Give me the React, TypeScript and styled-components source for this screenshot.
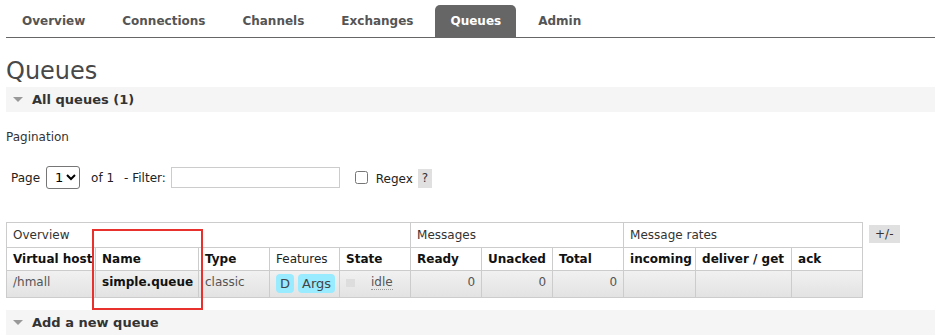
import { createGlobalStyle, styled } from "styled-components";

const GlobalStyle = createGlobalStyle`
  html, body {
    margin: 0;
    padding: 0;
    background: #fff;
  }
  body {
    font-family: "DejaVu Sans", Verdana, sans-serif;
    font-size: 12px;
    color: #484848;
  }
`;

const Page = styled.div`
  padding-left: 6px;
`;

const Menu = styled.ul`
  list-style: none;
  margin: 0;
  padding: 5px 0 0 1px;
  display: flex;
  gap: 7px;
  border-bottom: 1px solid #666;
`;

const Tab = styled.li<{ $active?: boolean }>`
  height: 32px;
  line-height: 32px;
  padding: 0 15px;
  font-weight: bold;
  font-size: 12px;
  color: ${p => (p.$active ? "#fff" : "#555")};
  background: ${p => (p.$active ? "#666" : "transparent")};
  border-radius: 5px 5px 0 0;
`;

const Title = styled.h1`
  margin: 18px 0 0;
  font-size: 24px;
  font-weight: normal;
  line-height: 30px;
  color: #484848;
`;

const SectionBar = styled.div<{ $top: number }>`
  margin-top: ${p => p.$top}px;
  height: 25px;
  background: #f5f5f5;
  display: flex;
  align-items: center;
  gap: 9px;
  padding-left: 7px;
  font-weight: bold;
  font-size: 13px;
  color: #333;
`;

const Caret = styled.span`
  width: 0;
  height: 0;
  border-left: 5px solid transparent;
  border-right: 5px solid transparent;
  border-top: 5px solid #999;
`;

const Label = styled.div`
  margin-top: 18px;
  font-size: 12px;
  color: #333;
`;

const FilterRow = styled.div`
  margin-top: 22px;
  padding-left: 5px;
  display: flex;
  align-items: center;
  font-size: 12px;
  color: #222;
`;

const Select = styled.select`
  margin: 0 11px 0 6px;
  width: 34px;
  height: 23px;
  font-size: 13px;
  font-family: "DejaVu Sans", sans-serif;
  border: 1px solid #767676;
  border-radius: 3px;
  background: #fff;
  padding: 0 0 0 4px;
`;

const Spacer = styled.span<{ $w: number }>`
  display: inline-block;
  width: ${p => p.$w}px;
`;

const TextInput = styled.input`
  margin-left: 5px;
  width: 169px;
  height: 21px;
  box-sizing: border-box;
  border: 1px solid #ccc;
  padding: 0 3px;
`;

const Check = styled.input`
  margin: 0 8px 0 15px;
  width: 13px;
  height: 13px;
`;

const RegexLabel = styled.span`
  padding-top: 3px;
`;

const Help = styled.span`
  margin: 2px 0 0 5px;
  width: 14px;
  height: 19px;
  line-height: 19px;
  text-align: center;
  background: #e0e0e0;
  color: #333;
`;

const TableArea = styled.div`
  position: relative;
  margin-top: 33px;
  display: flex;
  align-items: flex-start;
  gap: 6px;
`;

const Table = styled.table`
  border-collapse: collapse;
  table-layout: fixed;
  width: 857px;
  font-size: 12px;
  th, td {
    border: 1px solid #ccc;
    padding: 0 6px;
    text-align: left;
    white-space: nowrap;
    overflow: hidden;
  }
`;

const GroupRow = styled.tr`
  height: 25px;
  th {
    font-weight: normal;
    color: #333;
  }
`;

const HeadRow = styled.tr`
  height: 23px;
  th {
    font-weight: bold;
    color: #111;
  }
  th.plain {
    font-weight: normal;
    color: #222;
  }
`;

const DataRow = styled.tr`
  height: 27px;
  background: linear-gradient(#f1f1f1, #e2e2e2);
  td {
    color: #555;
    vertical-align: top;
    padding-top: 4px;
  }
  td.num {
    text-align: right;
  }
  td.name {
    font-weight: bold;
    color: #111;
  }
`;

const Badge = styled.span`
  display: inline-block;
  margin-right: 4px;
  padding: 0 4px;
  height: 19px;
  line-height: 19px;
  border-radius: 4px;
  background: #99ebff;
  color: #444;
  font-size: 13px;
  margin-top: -1px;
`;

const StateBox = styled.span`
  display: inline-block;
  width: 9px;
  height: 8px;
  background: #ddd;
  margin: 4px 16px 0 0;
  vertical-align: top;
`;

const Idle = styled.abbr`
  text-decoration: none;
  border-bottom: 1px dotted #999;
  color: #555;
`;

const Toggle = styled.span`
  margin-top: 3px;
  padding: 0 6px;
  height: 18px;
  line-height: 18px;
  background: #e0e0e0;
  color: #333;
`;

const Highlight = styled.div`
  position: absolute;
  left: 86px;
  top: 7px;
  width: 107px;
  height: 77px;
  border: 2px solid #e8302c;
  pointer-events: none;
`;

const widths = [89, 103, 71, 70, 71, 71, 71, 71, 72, 96, 71];

export default function App() {
  return (
    <>
      <GlobalStyle />
      <Page>
        <Menu>
          <Tab>Overview</Tab>
          <Tab>Connections</Tab>
          <Tab>Channels</Tab>
          <Tab>Exchanges</Tab>
          <Tab $active>Queues</Tab>
          <Tab>Admin</Tab>
        </Menu>

        <Title>Queues</Title>
        <SectionBar $top={1}>
          <Caret />
          All queues (1)
        </SectionBar>

        <Label>Pagination</Label>

        <FilterRow>
          Page
          <Select defaultValue="1">
            <option>1</option>
          </Select>
          of 1<Spacer $w={10} />- Filter:
          <TextInput type="text" />
          <Check type="checkbox" />
          <RegexLabel>Regex</RegexLabel>
          <Help>?</Help>
        </FilterRow>

        <TableArea>
          <Table>
            <colgroup>
              {widths.map((w, i) => (
                <col key={i} style={{ width: w }} />
              ))}
            </colgroup>
            <thead>
              <GroupRow>
                <th colSpan={5}>Overview</th>
                <th colSpan={3}>Messages</th>
                <th colSpan={3}>Message rates</th>
              </GroupRow>
              <HeadRow>
                <th>Virtual host</th>
                <th>Name</th>
                <th>Type</th>
                <th className="plain">Features</th>
                <th>State</th>
                <th>Ready</th>
                <th>Unacked</th>
                <th>Total</th>
                <th>incoming</th>
                <th>deliver / get</th>
                <th>ack</th>
              </HeadRow>
            </thead>
            <tbody>
              <DataRow>
                <td>/hmall</td>
                <td className="name">simple.queue</td>
                <td>classic</td>
                <td>
                  <Badge>D</Badge>
                  <Badge>Args</Badge>
                </td>
                <td>
                  <StateBox />
                  <Idle title="idle">idle</Idle>
                </td>
                <td className="num">0</td>
                <td className="num">0</td>
                <td className="num">0</td>
                <td></td>
                <td></td>
                <td></td>
              </DataRow>
            </tbody>
          </Table>
          <Toggle>+/-</Toggle>
          <Highlight />
        </TableArea>

        <SectionBar $top={12}>
          <Caret />
          Add a new queue
        </SectionBar>
      </Page>
    </>
  );
}
